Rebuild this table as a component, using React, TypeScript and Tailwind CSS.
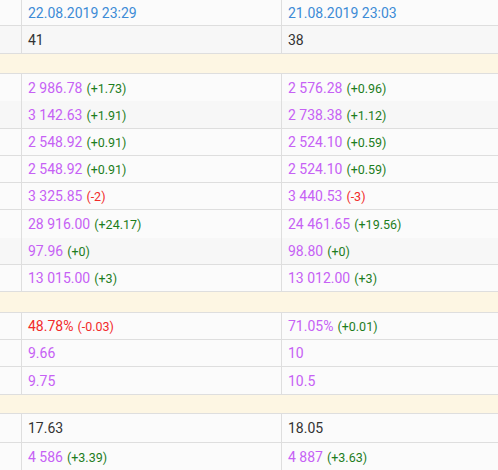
import React from "react";

type Cell = { v: string; c?: string; d?: string; dc?: string };
type Row =
  | { kind: "sep"; h: string }
  | { kind: "data"; h: string; bg: string; border: boolean; cells: [Cell, Cell] };

const PURPLE = "text-[#c661f5]";
const GREEN = "text-[#1d7d1d]";
const RED = "text-[#f22a2a]";
const DARK = "text-[#333333]";
const BLUE = "text-[#3d8bd6]";

const p = (v: string, d?: string, dc = GREEN): Cell => ({ v, c: PURPLE, d, dc });

const rows: Row[] = [
  { kind: "data", h: "h-[26px]", bg: "bg-[#fbfbfb]", border: true, cells: [{ v: "22.08.2019 23:29", c: BLUE }, { v: "21.08.2019 23:03", c: BLUE }] },
  { kind: "data", h: "h-[28px]", bg: "bg-[#f7f7f7]", border: true, cells: [{ v: "41", c: DARK }, { v: "38", c: DARK }] },
  { kind: "sep", h: "h-[20px]" },
  { kind: "data", h: "h-[27px]", bg: "bg-[#fbfbfb]", border: false, cells: [p("2 986.78", "(+1.73)"), p("2 576.28", "(+0.96)")] },
  { kind: "data", h: "h-[28px]", bg: "bg-[#f7f7f7]", border: true, cells: [p("3 142.63", "(+1.91)"), p("2 738.38", "(+1.12)")] },
  { kind: "data", h: "h-[27px]", bg: "bg-[#fbfbfb]", border: true, cells: [p("2 548.92", "(+0.91)"), p("2 524.10", "(+0.59)")] },
  { kind: "data", h: "h-[27px]", bg: "bg-[#fbfbfb]", border: true, cells: [p("2 548.92", "(+0.91)"), p("2 524.10", "(+0.59)")] },
  { kind: "data", h: "h-[27px]", bg: "bg-[#fbfbfb]", border: true, cells: [p("3 325.85", "(-2)", RED), p("3 440.53", "(-3)", RED)] },
  { kind: "data", h: "h-[28px]", bg: "bg-[#fbfbfb]", border: false, cells: [p("28 916.00", "(+24.17)"), p("24 461.65", "(+19.56)")] },
  { kind: "data", h: "h-[27px]", bg: "bg-[#f7f7f7]", border: true, cells: [p("97.96", "(+0)"), p("98.80", "(+0)")] },
  { kind: "data", h: "h-[27px]", bg: "bg-[#fbfbfb]", border: true, cells: [p("13 015.00", "(+3)"), p("13 012.00", "(+3)")] },
  { kind: "sep", h: "h-[21px]" },
  { kind: "data", h: "h-[27px]", bg: "bg-[#fbfbfb]", border: true, cells: [{ v: "48.78%", c: RED, d: "(-0.03)", dc: RED }, p("71.05%", "(+0.01)")] },
  { kind: "data", h: "h-[27px]", bg: "bg-[#fbfbfb]", border: true, cells: [p("9.66"), p("10")] },
  { kind: "data", h: "h-[28px]", bg: "bg-[#fbfbfb]", border: true, cells: [p("9.75"), p("10.5")] },
  { kind: "sep", h: "h-[19px]" },
  { kind: "data", h: "h-[29px]", bg: "bg-[#fbfbfb]", border: true, cells: [{ v: "17.63", c: DARK }, { v: "18.05", c: DARK }] },
  { kind: "data", h: "h-[28px]", bg: "bg-[#fbfbfb]", border: true, cells: [p("4 586", "(+3.39)"), p("4 887", "(+3.63)")] },
];

function Value({ cell }: { cell: Cell }) {
  return (
    <span className="whitespace-nowrap">
      <span className={`text-[14px] ${cell.c ?? ""}`}>{cell.v}</span>
      {cell.d && <span className={`ml-[4px] text-[12.5px] ${cell.dc}`}>{cell.d}</span>}
    </span>
  );
}

export default function App() {
  return (
    <div
      className="w-[498px] h-[470px] overflow-hidden bg-[#fbfbfb]"
      style={{ fontFamily: "Roboto, 'Liberation Sans', sans-serif" }}
    >
      {rows.map((row, i) =>
        row.kind === "sep" ? (
          <div key={i} className={`${row.h} bg-[#fdf6e3] border-b border-[#dedede]`} />
        ) : (
          <div
            key={i}
            className={`${row.h} ${row.bg} grid grid-cols-[22px_260px_1fr] ${row.border ? "border-b border-[#dedede]" : ""}`}
          >
            <div className="border-r border-[#dedede]" />
            <div className="border-r border-[#dedede] flex items-center pl-[6px]">
              <Value cell={row.cells[0]} />
            </div>
            <div className="flex items-center pl-[6px]">
              <Value cell={row.cells[1]} />
            </div>
          </div>
        )
      )}
    </div>
  );
}
